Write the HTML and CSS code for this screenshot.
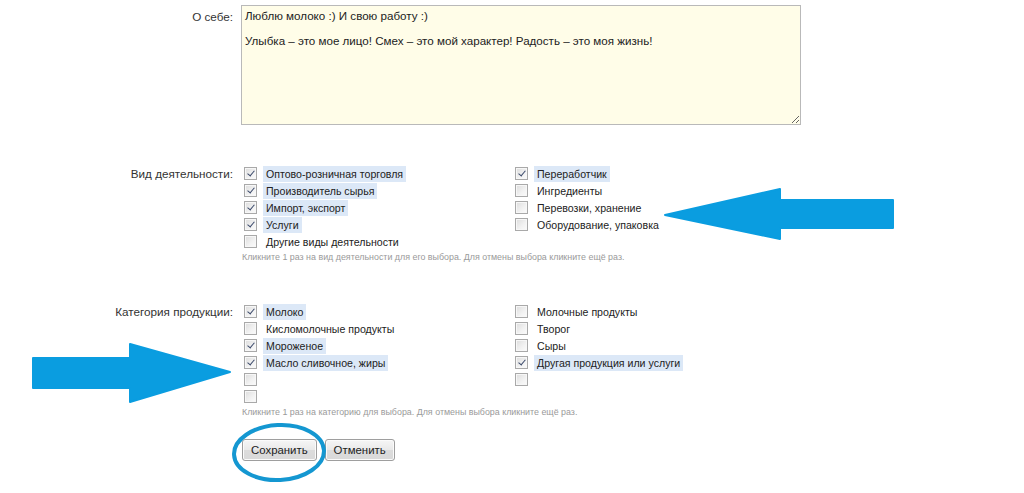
FILE: index.html
```html
<!DOCTYPE html>
<html lang="ru">
<head>
<meta charset="utf-8">
<title>Профиль</title>
<link rel="stylesheet" href="styles.css">
</head>
<body>
<div class="page">
  <div class="row about">
    <div class="label">О себе:</div>
    <textarea class="about-text" readonly>Люблю молоко :) И свою работу :)

Улыбка – это мое лицо! Смех – это мой характер! Радость – это моя жизнь!</textarea>
  </div>

  <div class="row section first">
    <div class="label">Вид деятельности:</div>
    <div class="field">
      <div class="opts">
        <div class="col">
          <div class="opt"><span class="cb on"></span><span class="txt sel">Оптово-розничная торговля</span></div>
          <div class="opt"><span class="cb on"></span><span class="txt sel">Производитель сырья</span></div>
          <div class="opt"><span class="cb on"></span><span class="txt sel">Импорт, экспорт</span></div>
          <div class="opt"><span class="cb on"></span><span class="txt sel">Услуги</span></div>
          <div class="opt"><span class="cb"></span><span class="txt">Другие виды деятельности</span></div>
        </div>
        <div class="col">
          <div class="opt"><span class="cb on"></span><span class="txt sel">Переработчик</span></div>
          <div class="opt"><span class="cb"></span><span class="txt">Ингредиенты</span></div>
          <div class="opt"><span class="cb"></span><span class="txt">Перевозки, хранение</span></div>
          <div class="opt"><span class="cb"></span><span class="txt">Оборудование, упаковка</span></div>
        </div>
      </div>
      <div class="hint">Кликните 1 раз на вид деятельности для его выбора. Для отмены выбора кликните ещё раз.</div>
    </div>
  </div>

  <div class="row section second">
    <div class="label">Категория продукции:</div>
    <div class="field">
      <div class="opts">
        <div class="col">
          <div class="opt"><span class="cb on"></span><span class="txt sel">Молоко</span></div>
          <div class="opt"><span class="cb"></span><span class="txt">Кисломолочные продукты</span></div>
          <div class="opt"><span class="cb on"></span><span class="txt sel">Мороженое</span></div>
          <div class="opt"><span class="cb on"></span><span class="txt sel">Масло сливочное, жиры</span></div>
          <div class="opt"><span class="cb"></span></div>
          <div class="opt"><span class="cb"></span></div>
        </div>
        <div class="col">
          <div class="opt"><span class="cb"></span><span class="txt">Молочные продукты</span></div>
          <div class="opt"><span class="cb"></span><span class="txt">Творог</span></div>
          <div class="opt"><span class="cb"></span><span class="txt">Сыры</span></div>
          <div class="opt"><span class="cb on"></span><span class="txt sel">Другая продукция или услуги</span></div>
          <div class="opt"><span class="cb"></span></div>
        </div>
      </div>
      <div class="hint">Кликните 1 раз на категорию для выбора. Для отмены выбора кликните ещё раз.</div>
    </div>
  </div>

  <div class="row actions">
    <div class="label"></div>
    <div class="buttons">
      <button class="btn" type="button">Сохранить</button>
      <button class="btn" type="button">Отменить</button>
    </div>
  </div>
</div>

<svg class="marks" width="1024" height="493" viewBox="0 0 1024 493" aria-hidden="true">
  <polygon class="arrow" points="665,215 780,189 780,200 893,200 893,228 780,228 780,239"/>
  <polygon class="arrow" points="33,358 130,358 130,344 230,372 130,402 130,388 33,388"/>
  <ellipse class="ring" cx="279" cy="452.5" rx="45" ry="27.5" transform="rotate(-3 279 452.5)"/>
</svg>
</body>
</html>
```

FILE: styles.css
```css
html, body {
  margin: 0;
  padding: 0;
  background: #ffffff;
}

body {
  font-family: "Liberation Sans", Arial, sans-serif;
  font-size: 11.7px;
  color: #222222;
  width: 1024px;
  height: 493px;
  overflow: hidden;
  position: relative;
}

.page {
  padding-top: 5px;
}

.row {
  display: grid;
  grid-template-columns: 233px 1fr;
  column-gap: 8px;
}

.label {
  text-align: right;
  color: #333333;
  line-height: 17px;
}

.about .label {
  padding-top: 3px;
}

.about-text {
  box-sizing: border-box;
  width: 560px;
  height: 120px;
  margin: 0;
  padding: 4px 3px;
  border: 1px solid #b9b9b9;
  background: #fffde8;
  font-family: "Liberation Sans", Arial, sans-serif;
  font-size: 11.6px;
  line-height: 12.5px;
  color: #222222;
  resize: both;
  outline: none;
}

.section.first {
  margin-top: 40px;
}

.section.second {
  margin-top: 40px;
}

.opts {
  display: flex;
}

.col {
  width: 271px;
  display: flex;
  flex-direction: column;
}

.opt {
  height: 17px;
  display: flex;
  align-items: center;
  padding-left: 3px;
}

.cb {
  box-sizing: border-box;
  width: 13px;
  height: 13px;
  flex: none;
  border: 1px solid #a9a9a9;
  background: linear-gradient(135deg, #dcdcdc 0%, #f2f2f2 60%, #fbfbfb 100%);
  box-shadow: inset 0 0 0 1px #f7f7f7;
  position: relative;
}

.cb.on::after {
  content: "";
  position: absolute;
  left: 4px;
  top: 1px;
  width: 3px;
  height: 6px;
  border-right: 1.5px solid #3b4a6b;
  border-bottom: 1.5px solid #3b4a6b;
  transform: rotate(40deg);
}

.txt {
  margin-left: 6px;
  padding: 0 3px;
  font-size: 10.6px;
  line-height: 16px;
  color: #222222;
}

.txt.sel {
  background: #dce8f7;
}

.hint {
  margin-top: 2px;
  padding-left: 1px;
  font-size: 8.9px;
  line-height: 11px;
  color: #9a9a9a;
}

.actions {
  margin-top: 21px;
}

.buttons {
  display: flex;
  gap: 8px;
  padding-left: 1px;
}

.btn {
  box-sizing: border-box;
  height: 22px;
  padding: 0 8px;
  border: 1px solid #9e9e9e;
  border-radius: 3px;
  background: linear-gradient(#f6f6f6 0%, #e9e9e9 50%, #dcdcdc 51%, #d9d9d9 100%);
  font-family: "Liberation Sans", Arial, sans-serif;
  font-size: 11.4px;
  color: #222222;
  box-shadow: inset 0 0 0 1px #fbfbfb;
}

.marks {
  position: absolute;
  left: 0;
  top: 0;
  pointer-events: none;
}

.arrow {
  fill: #0a9de0;
  stroke: #0a9de0;
  stroke-width: 2;
  stroke-linejoin: round;
}

.ring {
  fill: none;
  stroke: #1497d1;
  stroke-width: 4;
}
```
